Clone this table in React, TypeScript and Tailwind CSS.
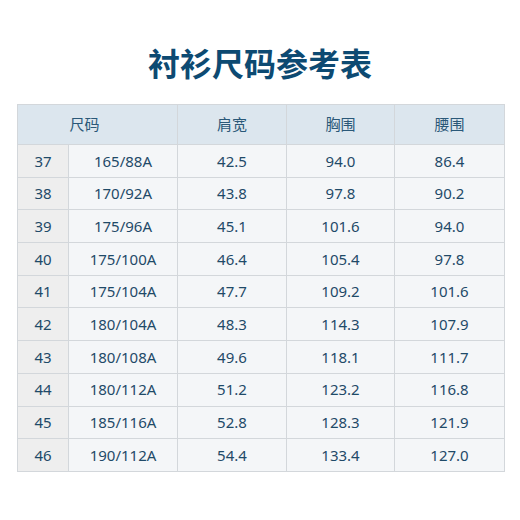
import React from "react";

const rows = [
  ["37", "165/88A", "42.5", "94.0", "86.4"],
  ["38", "170/92A", "43.8", "97.8", "90.2"],
  ["39", "175/96A", "45.1", "101.6", "94.0"],
  ["40", "175/100A", "46.4", "105.4", "97.8"],
  ["41", "175/104A", "47.7", "109.2", "101.6"],
  ["42", "180/104A", "48.3", "114.3", "107.9"],
  ["43", "180/108A", "49.6", "118.1", "111.7"],
  ["44", "180/112A", "51.2", "123.2", "116.8"],
  ["45", "185/116A", "52.8", "128.3", "121.9"],
  ["46", "190/112A", "54.4", "133.4", "127.0"],
];

const headCls =
  "h-[40px] flex items-center justify-center bg-[#dce6ee] border-r border-b border-[#d3d7db] text-[#2a5878] font-['Noto_Sans_CJK_SC',sans-serif]";

export default function App() {
  return (
    <div className="w-[520px] h-[520px] bg-white flex flex-col items-center font-['Noto_Sans','Noto_Sans_CJK_SC',sans-serif]">
      <h1 className="mt-[40px] h-[44px] leading-[44px] text-[32px] font-bold text-[#0d4a72] font-['Noto_Sans_CJK_SC',sans-serif]">
        衬衫尺码参考表
      </h1>
      <div className="mt-[20px] ml-[2px] grid grid-cols-[51px_109px_109px_108px_110px] border-l border-t border-[#d3d7db] text-[15px] text-[#1f4a68]">
        <div className={"col-span-2 pr-[26px] " + headCls}>尺码</div>
        <div className={headCls}>肩宽</div>
        <div className={headCls}>胸围</div>
        <div className={headCls}>腰围</div>
        {rows.map((r) => (
          <React.Fragment key={r[0]}>
            {r.map((c, i) => (
              <div
                key={i}
                className={
                  "h-[32.7px] flex items-center justify-center border-r border-b border-[#d3d7db] " +
                  (i === 0 ? "bg-[#eeeeee]" : "bg-[#f4f6f8]")
                }
              >
                {c}
              </div>
            ))}
          </React.Fragment>
        ))}
      </div>
    </div>
  );
}
